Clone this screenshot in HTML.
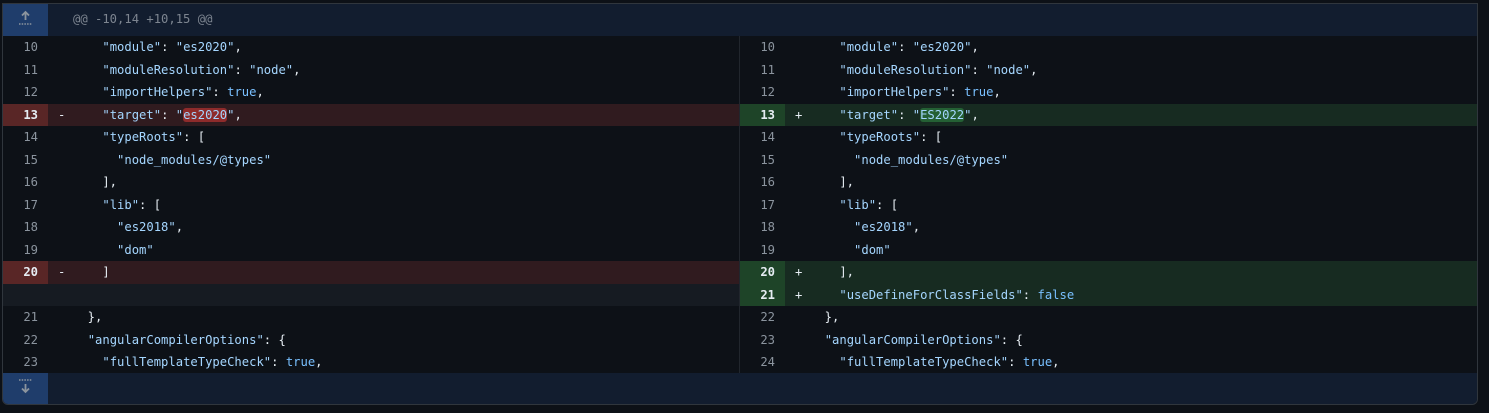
<!DOCTYPE html>
<html><head><style>
*{margin:0;padding:0;box-sizing:border-box}
body{width:1489px;height:413px;background:#0d1117;font-family:"DejaVu Sans Mono","Liberation Mono",monospace;font-size:12.2px;color:#e6edf3;overflow:hidden;position:relative}
.box{position:absolute;left:2px;top:3px;width:1476px;height:402px;border:1px solid #30363d;border-radius:0 0 6px 6px;overflow:hidden;background:#0d1117}
.hunk{position:absolute;left:0;width:100%;height:32px;background:#121d2f}
.exp{position:absolute;left:0;top:0;width:45px;height:32px;background:#1f3d6b;color:#8b949e}
.hunk .t{position:absolute;left:70px;top:8px;color:#7d8590}
.row{position:absolute;height:22.5px;line-height:22.5px;white-space:pre}
.n{position:absolute;top:0;width:45px;height:100%;text-align:right;padding-right:10px;color:#8b949e}
.s{position:absolute;top:0}
.c{position:absolute;top:0}
.del .n{background:#592626;color:#e6edf3;font-weight:bold}
.del{background:#301b1f}
.add .n{background:#1e4428;color:#e6edf3;font-weight:bold}
.add{background:#172b21}
.emp{background:#161b22}
.k{color:#a5d6ff}.b{color:#79c0ff}
.hd{background:#8e2b2b;border-radius:3px}
.ha{background:#246034;border-radius:3px}
.div{position:absolute;left:736px;top:32px;width:1px;height:337px;background:#21262d}
</style></head><body>
<div class="box">
<div class="hunk" style="top:0"><div class="exp">
<svg width="45" height="32" viewBox="0 0 45 32"><path d="M22.5 8v8M19 11.5l3.5-3.5 3.5 3.5" stroke="#8b949e" stroke-width="1.8" fill="none"/><path d="M16 20h13" stroke="#8b949e" stroke-width="1.4" stroke-dasharray="1.5 1.2"/></svg></div><div class="t">@@ -10,14 +10,15 @@</div></div>
<div class="div"></div>
<div class="hunk" style="top:369px"><div class="exp">
<svg width="45" height="32" viewBox="0 0 45 32"><path d="M16 7h13" stroke="#8b949e" stroke-width="1.4" stroke-dasharray="1.5 1.2"/><path d="M22.5 11v8M19 15.5l3.5 3.5 3.5-3.5" stroke="#8b949e" stroke-width="1.8" fill="none"/></svg></div></div>

<div class="row" style="top:32px;left:0;width:736px"><span class="n">10</span><span class="c" style="left:70px">    <span class="k">"module"</span>: <span class="k">"es2020"</span>,</span></div>
<div class="row" style="top:54.5px;left:0;width:736px"><span class="n">11</span><span class="c" style="left:70px">    <span class="k">"moduleResolution"</span>: <span class="k">"node"</span>,</span></div>
<div class="row" style="top:77px;left:0;width:736px"><span class="n">12</span><span class="c" style="left:70px">    <span class="k">"importHelpers"</span>: <span class="b">true</span>,</span></div>
<div class="row del" style="top:99.5px;left:0;width:736px"><span class="n">13</span><span class="s" style="left:55px">-</span><span class="c" style="left:70px">    <span class="k">"target"</span>: <span class="k">"<span class="hd">es2020</span>"</span>,</span></div>
<div class="row" style="top:122px;left:0;width:736px"><span class="n">14</span><span class="c" style="left:70px">    <span class="k">"typeRoots"</span>: [</span></div>
<div class="row" style="top:144.5px;left:0;width:736px"><span class="n">15</span><span class="c" style="left:70px">      <span class="k">"node_modules/@types"</span></span></div>
<div class="row" style="top:167px;left:0;width:736px"><span class="n">16</span><span class="c" style="left:70px">    ],</span></div>
<div class="row" style="top:189.5px;left:0;width:736px"><span class="n">17</span><span class="c" style="left:70px">    <span class="k">"lib"</span>: [</span></div>
<div class="row" style="top:212px;left:0;width:736px"><span class="n">18</span><span class="c" style="left:70px">      <span class="k">"es2018"</span>,</span></div>
<div class="row" style="top:234.5px;left:0;width:736px"><span class="n">19</span><span class="c" style="left:70px">      <span class="k">"dom"</span></span></div>
<div class="row del" style="top:257px;left:0;width:736px"><span class="n">20</span><span class="s" style="left:55px">-</span><span class="c" style="left:70px">    ]</span></div>
<div class="row emp" style="top:279.5px;left:0;width:736px"></div>
<div class="row" style="top:302px;left:0;width:736px"><span class="n">21</span><span class="c" style="left:70px">  },</span></div>
<div class="row" style="top:324.5px;left:0;width:736px"><span class="n">22</span><span class="c" style="left:70px">  <span class="k">"angularCompilerOptions"</span>: {</span></div>
<div class="row" style="top:347px;left:0;width:736px"><span class="n">23</span><span class="c" style="left:70px">    <span class="k">"fullTemplateTypeCheck"</span>: <span class="b">true</span>,</span></div>

<div class="row" style="top:32px;left:737px;width:739px"><span class="n">10</span><span class="c" style="left:70px">    <span class="k">"module"</span>: <span class="k">"es2020"</span>,</span></div>
<div class="row" style="top:54.5px;left:737px;width:739px"><span class="n">11</span><span class="c" style="left:70px">    <span class="k">"moduleResolution"</span>: <span class="k">"node"</span>,</span></div>
<div class="row" style="top:77px;left:737px;width:739px"><span class="n">12</span><span class="c" style="left:70px">    <span class="k">"importHelpers"</span>: <span class="b">true</span>,</span></div>
<div class="row add" style="top:99.5px;left:737px;width:739px"><span class="n">13</span><span class="s" style="left:55px">+</span><span class="c" style="left:70px">    <span class="k">"target"</span>: <span class="k">"<span class="ha">ES2022</span>"</span>,</span></div>
<div class="row" style="top:122px;left:737px;width:739px"><span class="n">14</span><span class="c" style="left:70px">    <span class="k">"typeRoots"</span>: [</span></div>
<div class="row" style="top:144.5px;left:737px;width:739px"><span class="n">15</span><span class="c" style="left:70px">      <span class="k">"node_modules/@types"</span></span></div>
<div class="row" style="top:167px;left:737px;width:739px"><span class="n">16</span><span class="c" style="left:70px">    ],</span></div>
<div class="row" style="top:189.5px;left:737px;width:739px"><span class="n">17</span><span class="c" style="left:70px">    <span class="k">"lib"</span>: [</span></div>
<div class="row" style="top:212px;left:737px;width:739px"><span class="n">18</span><span class="c" style="left:70px">      <span class="k">"es2018"</span>,</span></div>
<div class="row" style="top:234.5px;left:737px;width:739px"><span class="n">19</span><span class="c" style="left:70px">      <span class="k">"dom"</span></span></div>
<div class="row add" style="top:257px;left:737px;width:739px"><span class="n">20</span><span class="s" style="left:55px">+</span><span class="c" style="left:70px">    ],</span></div>
<div class="row add" style="top:279.5px;left:737px;width:739px"><span class="n">21</span><span class="s" style="left:55px">+</span><span class="c" style="left:70px">    <span class="k">"useDefineForClassFields"</span>: <span class="b">false</span></span></div>
<div class="row" style="top:302px;left:737px;width:739px"><span class="n">22</span><span class="c" style="left:70px">  },</span></div>
<div class="row" style="top:324.5px;left:737px;width:739px"><span class="n">23</span><span class="c" style="left:70px">  <span class="k">"angularCompilerOptions"</span>: {</span></div>
<div class="row" style="top:347px;left:737px;width:739px"><span class="n">24</span><span class="c" style="left:70px">    <span class="k">"fullTemplateTypeCheck"</span>: <span class="b">true</span>,</span></div>
</div>
</body></html>
